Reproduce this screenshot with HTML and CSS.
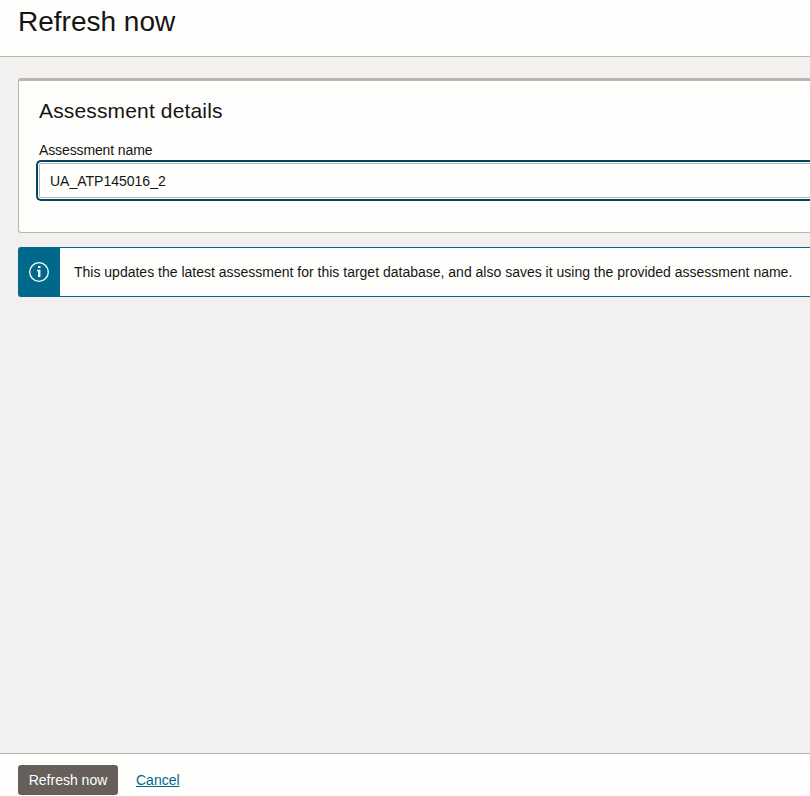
FILE: index.html
```html
<!DOCTYPE html>
<html lang="en">
<head>
<meta charset="utf-8">
<title>Refresh now</title>
<link rel="stylesheet" href="styles.css">
</head>
<body>
<header class="header"><h1>Refresh now</h1></header>
<main class="content">
  <section class="card">
    <h2>Assessment details</h2>
    <label for="name">Assessment name</label>
    <div class="field"><input id="name" type="text" value="UA_ATP145016_2"></div>
  </section>
  <div class="notice">
    <div class="notice-icon">
      <svg width="22" height="22" viewBox="0 0 22 22" fill="none" stroke="#fff">
        <circle cx="11" cy="11" r="9.3" stroke-width="1.3"/>
        <path d="M9 9.5h2.6V16" stroke-width="1.6"/>
        <path d="M11 9v7" stroke-width="2"/>
        <path d="M10 6h2.5" stroke-width="2"/>
      </svg>
    </div>
    <p>This updates the latest assessment for this target database, and also saves it using the provided assessment name.</p>
  </div>
</main>
<footer class="footer">
  <button type="button">Refresh now</button>
  <a href="#">Cancel</a>
</footer>
</body>
</html>
```
FILE: styles.css
```css
* { box-sizing: border-box; }
body {
  margin: 0;
  height: 796px;
  display: flex;
  flex-direction: column;
  overflow: hidden;
  background: #f3f1f0;
  color: #161513;
  font: 14px/20px "Liberation Sans", Arial, sans-serif;
}
h1, h2, p { margin: 0; font-weight: 400; }
.header {
  height: 57px;
  padding: 4px 18px;
  background: #fefefc;
  border-bottom: 1px solid #bbb5b0;
}
h1 { font-size: 28px; line-height: 36px; }
.content {
  flex: 1;
  padding: 21px 0 0 18px;
}
.card {
  height: 155px;
  padding: 18px 0 0 20px;
  background: #fefefc;
  border: 1px solid #bbb5b0;
  border-top-width: 3px;
  border-right: 0;
  border-radius: 3px 0 0 3px;
}
h2 { font-size: 21px; line-height: 24px; letter-spacing: 0.15px; }
label { display: block; margin-top: 17px; letter-spacing: -0.12px; }
.field {
  height: 41px;
  margin-left: -3px;
  padding: 1px 0 1px 1px;
  border: 2px solid #00485f;
  border-right: 0;
  border-radius: 5px 0 0 5px;
}
input {
  display: block;
  width: 100%;
  height: 35px;
  padding: 0 10px;
  border: 1px solid #bbb5b0;
  border-right: 0;
  border-radius: 2px 0 0 2px;
  background: #fefefc;
  color: inherit;
  font: inherit;
  outline: 0;
}
.notice {
  display: flex;
  height: 50px;
  margin-top: 14px;
  background: #fefefc;
  border: 1px solid #00688c;
  border-right: 0;
  border-radius: 3px 0 0 3px;
}
.notice-icon {
  display: flex;
  flex: none;
  width: 41px;
  padding-right: 1px;
  align-items: center;
  justify-content: center;
  background: #00688c;
}
.notice-icon svg { margin-left: -1px; }
.notice p { padding: 14px 0 0 14px; white-space: nowrap; }
.footer {
  display: flex;
  height: 43px;
  padding: 11px 18px 0;
  gap: 18px;
  background: #fefefc;
  border-top: 1px solid #b7b5b3;
}
button {
  width: 100px;
  height: 30px;
  padding: 0;
  border: 0;
  border-radius: 3px;
  background: #665f5b;
  color: #fff;
  font: inherit;
}
a { line-height: 30px; color: #00688c; }
```
